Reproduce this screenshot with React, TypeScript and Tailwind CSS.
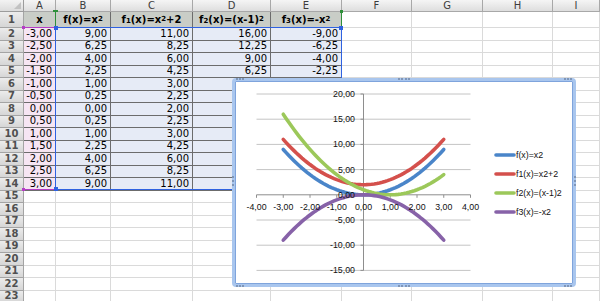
import React from "react";

const COLS = ["A", "B", "C", "D", "E", "F", "G", "H", "I"];
const XS = Array.from({ length: 13 }, (_, i) => -3 + i * 0.5);

const fmt = (v: number) => v.toFixed(2).replace(".", ",");

const funcs = [
  (x: number) => x * x,
  (x: number) => x * x + 2,
  (x: number) => (x - 1) * (x - 1),
  (x: number) => -x * x,
];

const SERIES = [
  { name: "f(x)=x2", color: "#4a85c9" },
  { name: "f1(x)=x2+2", color: "#d4504c" },
  { name: "f2(x)=(x-1)2", color: "#9cc85a" },
  { name: "f3(x)=-x2", color: "#8762a8" },
];

function HeaderLabel({ c }: { c: number }) {
  const sup = (s: string) => <sup className="text-[7px] relative -top-[1px]">{s}</sup>;
  const sub = (s: string) => <sub className="text-[7px] relative top-[1px]">{s}</sub>;
  if (c === 0) return <>x</>;
  if (c === 1) return <>f(x)=x{sup("2")}</>;
  if (c === 2) return <>f{sub("1")}(x)=x{sup("2")}+2</>;
  if (c === 3) return <>f{sub("2")}(x)=(x-1){sup("2")}</>;
  return <>f{sub("3")}(x)=-x{sup("2")}</>;
}

function Cell({ r, c }: { r: number; c: number }) {
  const inData = r <= 14 && c <= 4;
  const border = inData ? "border-[#6c6c6c]" : "border-[#dadada]";
  if (r === 1 && c <= 4) {
    return (
      <div className={`border-r border-b ${border} bg-[#c9cdc7] flex items-center justify-center font-bold text-[10px] leading-none whitespace-nowrap`}>
        <HeaderLabel c={c} />
      </div>
    );
  }
  let bg = "bg-white";
  let text = "";
  if (r >= 2 && r <= 14 && c <= 4) {
    const x = XS[r - 2];
    bg = c === 0 ? "bg-[#f6e5f3]" : "bg-[#e6ebf6]";
    // D and E below row 5 sit under the chart
    const hidden = c >= 3 && r >= 6;
    text = hidden ? "" : c === 0 ? fmt(x) : fmt(funcs[c - 1](x) + 0);
  }
  return (
    <div className={`border-r border-b ${border} ${bg} flex items-center justify-end pr-[3px] text-[10px] leading-none`}>
      {text}
    </div>
  );
}

function Chart() {
  const px = (u: number) => 128.5 + u * 26.75;
  const py = (v: number) => 113.8 - v * 5.04;
  const curve = (f: (x: number) => number) =>
    Array.from({ length: 61 }, (_, i) => -3 + i * 0.1)
      .map(x => `${px(x).toFixed(2)},${py(f(x)).toFixed(2)}`)
      .join(" ");

  return (
    <svg width="338" height="203" className="block" style={{ fontFamily: "'Liberation Sans', Arial, sans-serif" }}>
      {[20, 15, 10, 5, -5, -10, -15].map(v => (
        <line key={v} x1={px(-4)} x2={px(4)} y1={py(v)} y2={py(v)} stroke="#c4c4c4" strokeWidth="1" />
      ))}
      <line x1={px(0)} x2={px(0)} y1={py(20)} y2={py(-15)} stroke="#8e8e8e" strokeWidth="1" />
      <line x1={px(-4)} x2={px(4)} y1={py(0)} y2={py(0)} stroke="#8e8e8e" strokeWidth="1" />
      {[-4, -3, -2, -1, 0, 1, 2, 3, 4].map(u => (
        <line key={u} x1={px(u)} x2={px(u)} y1={py(0)} y2={py(0) + 3} stroke="#8e8e8e" strokeWidth="1" />
      ))}
      {[20, 15, 10, 5, 0, -5, -10, -15].map(v => (
        <line key={v} x1={px(0) - 3} x2={px(0)} y1={py(v)} y2={py(v)} stroke="#8e8e8e" strokeWidth="1" />
      ))}

      {SERIES.map((s, i) => (
        <polyline key={s.name} points={curve(funcs[i])} fill="none" stroke={s.color} strokeWidth="3.6" strokeLinecap="round" strokeLinejoin="round" />
      ))}

      {[20, 15, 10, 5, 0, -5, -10, -15].map(v => (
        <text key={v} x={120} y={py(v) + 3} textAnchor="end" fontSize="8.8" fill="#111">
          {fmt(v)}
        </text>
      ))}
      {[-4, -3, -2, -1, 0, 1, 2, 3, 4].map(u => (
        <text key={u} x={px(u)} y={129} textAnchor="middle" fontSize="8.8" fill="#111">
          {fmt(u)}
        </text>
      ))}

      {/* legend */}
      {SERIES.map((s, i) => {
        const y = 74 + i * 19;
        return (
          <g key={s.name}>
            <line x1={261} x2={279} y1={y} y2={y} stroke={s.color} strokeWidth="3.6" strokeLinecap="round" />
            <text x={281} y={y + 3} fontSize="8.8" fill="#111">
              {s.name}
            </text>
          </g>
        );
      })}
    </svg>
  );
}

function Grip({ className }: { className: string }) {
  return <div className={`absolute border-dotted border-[#7f96b8] ${className}`} />;
}

export default function App() {
  const rows = Array.from({ length: 23 }, (_, i) => i + 1);
  return (
    <div className="relative w-[600px] h-[301px] overflow-hidden bg-white" style={{ fontFamily: "'DejaVu Sans', Verdana, sans-serif" }}>
      <div className="grid grid-cols-[24px_32px_55px_82px_78px_71px_70px_71px_70px_47px] grid-rows-[12px_16px_repeat(22,12.5px)] text-black">
        {/* column headers */}
        <div className="relative border-r border-b border-[#9c9c9c] bg-gradient-to-b from-[#f3f3f3] to-[#dcdcdc]">
          <div className="absolute right-[2px] bottom-[2px] w-0 h-0 border-l-[7px] border-l-transparent border-b-[7px] border-b-[#c2c2c2]" />
        </div>
        {COLS.map(l => (
          <div key={l} className="border-r border-b border-[#a8a8a8] bg-gradient-to-b from-[#f5f5f5] to-[#dedede] flex items-center justify-center text-[10px] leading-none text-[#3c3c3c]">
            {l}
          </div>
        ))}

        {rows.map(r => (
          <React.Fragment key={r}>
            <div className="border-r border-b border-[#a4a4a4] bg-gradient-to-b from-[#ececec] to-[#d6d6d6] flex items-center justify-center font-bold text-[10px] leading-none text-[#505050]">
              {r}
            </div>
            {COLS.map((_, c) => (
              <Cell key={c} r={r} c={c} />
            ))}
          </React.Fragment>
        ))}
      </div>

      {/* chart source ranges: series names, x values, y values */}
      <div className="absolute left-[55px] top-[11px] w-[287px] h-[17px] border-x border-[#2e8f3a]">
        <div className="absolute -left-[3px] -top-[1px] w-[5px] h-[2px] bg-[#2e8f3a]" />
        <div className="absolute -right-[2px] -top-[1px] w-[3px] h-[3px] bg-[#2e8f3a]" />
      </div>
      <div className="absolute left-[23px] top-[27px] w-[33px] h-[163px] border-y border-[#b53dc6]">
        <div className="absolute -left-[1px] -top-[2px] w-[3px] h-[3px] bg-[#b53dc6]" />
        <div className="absolute -left-[1px] -bottom-[2px] w-[3px] h-[3px] bg-[#b53dc6]" />
      </div>
      <div className="absolute left-[55px] top-[27px] w-[287px] h-[163px] border border-[#2f62e0]">
        <div className="absolute -left-[2px] -top-[2px] w-[4px] h-[4px] bg-[#2f62e0]" />
        <div className="absolute -right-[2px] -top-[2px] w-[4px] h-[4px] bg-[#2f62e0]" />
        <div className="absolute -left-[2px] -bottom-[2px] w-[4px] h-[4px] bg-[#2f62e0]" />
      </div>

      {/* floating chart */}
      <div className="absolute left-[232px] top-[78px] w-[344px] h-[209px] rounded-[4px] border-[3px] border-[#a9c6ee] bg-white shadow-[inset_0_0_0_1px_#7fa4dc]">
        <Chart />
        <Grip className="left-[1px] -top-[3px] w-[8px] border-t-2" />
        <Grip className="left-[163px] -top-[3px] w-[12px] border-t-2" />
        <Grip className="right-[1px] -top-[3px] w-[8px] border-t-2" />
        <Grip className="left-[1px] -bottom-[3px] w-[8px] border-t-2" />
        <Grip className="left-[163px] -bottom-[3px] w-[12px] border-t-2" />
        <Grip className="right-[1px] -bottom-[3px] w-[8px] border-t-2" />
        <Grip className="-left-[3px] top-[95px] h-[10px] border-l-2" />
        <Grip className="-right-[3px] top-[95px] h-[10px] border-l-2" />
      </div>
    </div>
  );
}
